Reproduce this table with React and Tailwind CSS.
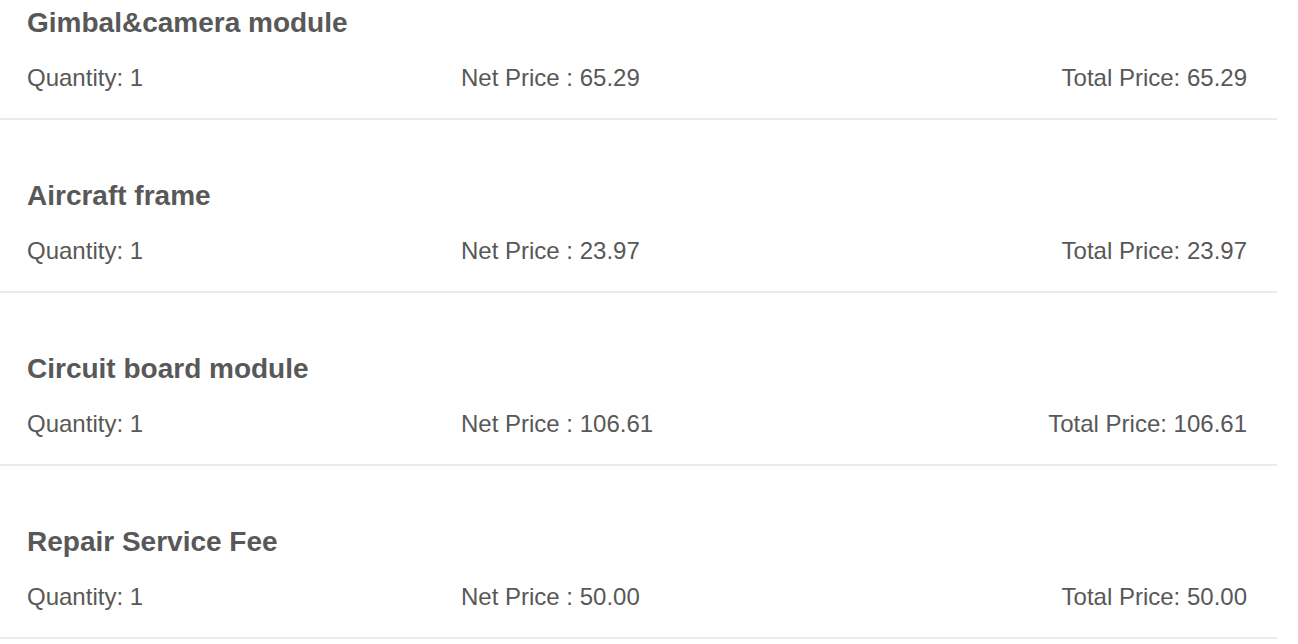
import React from 'react';

const items = [
  { name: 'Gimbal&camera module', qty: 1, net: '65.29', total: '65.29' },
  { name: 'Aircraft frame', qty: 1, net: '23.97', total: '23.97' },
  { name: 'Circuit board module', qty: 1, net: '106.61', total: '106.61' },
  { name: 'Repair Service Fee', qty: 1, net: '50.00', total: '50.00' },
];

export default function App() {
  return (
    <div
      className="w-[1298px] h-[644px] overflow-hidden bg-white text-[#585858]"
      style={{ fontFamily: '"Liberation Sans", Arial, Helvetica, sans-serif' }}
    >
      <div className="w-[1277px]">
        {items.map((item, i) => (
          <div
            key={item.name}
            className={`border-b-2 border-[#ebebeb] pl-[27px] pr-[30px] pb-[23px] ${i === 0 ? 'pt-[3px]' : 'pt-[56px]'}`}
          >
            <div className="text-[28px] leading-[40px] font-bold">{item.name}</div>
            <div className="mt-[18px] flex text-[24px] leading-[34px]">
              <div className="w-[434px]">Quantity: {item.qty}</div>
              <div className="flex-1">Net Price : {item.net}</div>
              <div className="text-right">Total Price: {item.total}</div>
            </div>
          </div>
        ))}
      </div>
    </div>
  );
}
